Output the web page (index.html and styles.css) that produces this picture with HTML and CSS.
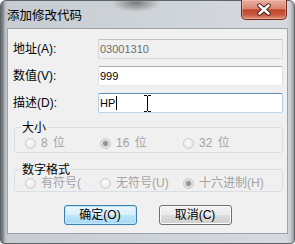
FILE: index.html
```html
<!DOCTYPE html>
<html>
<head>
<meta charset="utf-8">
<link rel="stylesheet" href="styles.css">
</head>
<body>
<div class="window">
  <div class="titlebar">
    <span class="title">添加修改代码</span>
    <div class="close">
      <svg width="16" height="13" viewBox="0 0 16 13">
        <path d="M3.5 2.5 L12.5 10.5 M12.5 2.5 L3.5 10.5" stroke="#4a1a12" stroke-width="4.4" stroke-linecap="round"/>
        <path d="M3.5 2.5 L12.5 10.5 M12.5 2.5 L3.5 10.5" stroke="#fff" stroke-width="2.6" stroke-linecap="round"/>
      </svg>
    </div>
  </div>
  <div class="client">
    <div class="row"><span class="label">地址(A):</span><div class="edit disabled">03001310</div></div>
    <div class="row"><span class="label">数值(V):</span><div class="edit">999</div></div>
    <div class="row"><span class="label">描述(D):</span><div class="edit focus">HP<span class="caret"></span>
      <svg class="ibeam" width="7" height="17" viewBox="0 0 7 17">
        <path d="M0 0.5H3 M4 0.5H7 M3.5 1V16 M0 16.5H3 M4 16.5H7" stroke="#000" stroke-width="1" fill="none"/>
      </svg>
    </div></div>
    <fieldset class="group g1">
      <legend>大小</legend>
      <div class="radios">
        <span class="radio"><span class="dot"></span>8 位</span>
        <span class="radio"><span class="dot checked"></span>16 位</span>
        <span class="radio"><span class="dot"></span>32 位</span>
      </div>
    </fieldset>
    <fieldset class="group g2">
      <legend>数字格式</legend>
      <div class="radios">
        <span class="radio"><span class="dot"></span>有符号(</span>
        <span class="radio"><span class="dot"></span>无符号(U)</span>
        <span class="radio"><span class="dot checked"></span>十六进制(H)</span>
      </div>
    </fieldset>
    <div class="buttons">
      <div class="btn default">确定(O)</div>
      <div class="btn">取消(C)</div>
    </div>
  </div>
</div>
</body>
</html>
```
FILE: styles.css
```css
* { box-sizing: border-box; }
body {
  margin: 0;
  width: 295px;
  height: 244px;
  overflow: hidden;
  font: 12px/14px "Liberation Sans", "Noto Sans CJK SC", sans-serif;
  color: #000;
  background: #fff;
}
.window {
  width: 295px;
  height: 244px;
  border: 1px solid #5f6469;
  border-radius: 6px 6px 4px 4px;
  background:
    radial-gradient(ellipse 24px 9px at 135px 2px, rgba(50,50,50,.55), rgba(50,50,50,0)),
    linear-gradient(to right, #6d7276 0, #7d8287 2px, #b9bec3 4px, rgba(200,205,210,0) 7px),
    linear-gradient(to left, #8f949a 0, #c2c7cc 3px, rgba(200,205,210,0) 7px),
    linear-gradient(to right, #c6ccd1, #d6dade);
  display: flex;
  flex-direction: column;
}
.titlebar {
  height: 27px;
  display: flex;
  align-items: flex-start;
}
.title {
  margin: 6px 0 0 6px;
  font-family: "Noto Sans CJK SC", sans-serif;
  font-size: 12.5px;
  line-height: 15px;
}
.close {
  margin-left: auto;
  margin-right: 7px;
  margin-top: -1px;
  width: 46px;
  height: 20px;
  border: 1px solid #6b2a1e;
  border-top: none;
  border-radius: 0 0 5px 5px;
  background: linear-gradient(#eab0a2, #d98470 45%, #c2452d 52%, #c85a41 78%, #e2937a);
  box-shadow: inset 0 0 0 1px rgba(255,200,180,.45);
  display: flex;
  align-items: center;
  justify-content: center;
}
.client {
  margin: 0 6px;
  height: 206px;
  border: 1px solid #9ca3aa;
  background: #f0f0f0;
  padding: 10px 4px 0 5px;
  display: flex;
  flex-direction: column;
}
.row {
  display: flex;
  align-items: center;
  height: 20px;
}
.row + .row { margin-top: 7px; }
.label { width: 85px; }
.edit {
  position: relative;
  width: 185px;
  height: 20px;
  padding-left: 1px;
  display: flex;
  align-items: center;
  background: #fff;
  border: 1px solid;
  border-color: #abadb3 #dbdfe6 #e3e9ef #e2e3ea;
  border-radius: 2px;
  font-size: 11px;
}
.edit.disabled {
  background: #f0f0f0;
  border-color: #bfc1c4 #d6d8db #d6d8db #d6d8db;
  color: #6d6d6d;
}
.edit.focus {
  border-color: #5b8fb9 #b5cfe7 #b7d9ed #b5cfe7;
}
.caret {
  display: inline-block;
  width: 1px;
  height: 14px;
  margin-left: 1px;
  background: #000;
}
.ibeam {
  position: absolute;
  left: 45px;
  top: 1px;
}
.group {
  margin: 7px 0 0 1px;
  padding: 2px 0 2px 6px;
  border: 1px solid #d5dfe5;
  border-radius: 3px;
  min-width: 0;
}
.group.g2 {
  margin-top: 9px;
  padding: 0 0 1px 6px;
}
legend {
  padding: 0 1px;
  line-height: 14px;
  font-family: "Noto Sans CJK SC", sans-serif;
}
.radios {
  display: grid;
  grid-template-columns: 75px 83px 1fr;
  padding-left: 4px;
  height: 14px;
  align-items: center;
}
.radio {
  display: flex;
  align-items: center;
  color: #a3a3a3;
  white-space: nowrap;
  word-spacing: 2px;
}
.dot {
  width: 11px;
  height: 11px;
  border-radius: 50%;
  border: 1px solid #c9c9c9;
  background: radial-gradient(circle at 40% 35%, #fbfbfb, #e3e3e3);
  margin-right: 5px;
  flex: none;
}
.dot.checked {
  background: radial-gradient(circle, #8f8f8f 0, #9c9c9c 2.2px, #d4d4d4 3px, #efefef 5px);
}
.buttons {
  display: flex;
  justify-content: center;
  gap: 22px;
  margin: 13px 0 0 -1px;
}
.btn {
  width: 73px;
  height: 20px;
  border: 1px solid #707070;
  border-radius: 3px;
  background: linear-gradient(#f2f2f2 0, #ebebeb 50%, #dddddd 50%, #cfcfcf 100%);
  box-shadow: inset 0 0 0 1px #fcfcfc;
  display: flex;
  align-items: center;
  justify-content: center;
}
.btn.default {
  border-color: #3c7fb1;
  background: linear-gradient(#eaf6fd 0, #d9f0fc 50%, #bee6fd 50%, #a7d9f5 100%);
  box-shadow: inset 0 0 0 1px #bfe9fb;
}
```
